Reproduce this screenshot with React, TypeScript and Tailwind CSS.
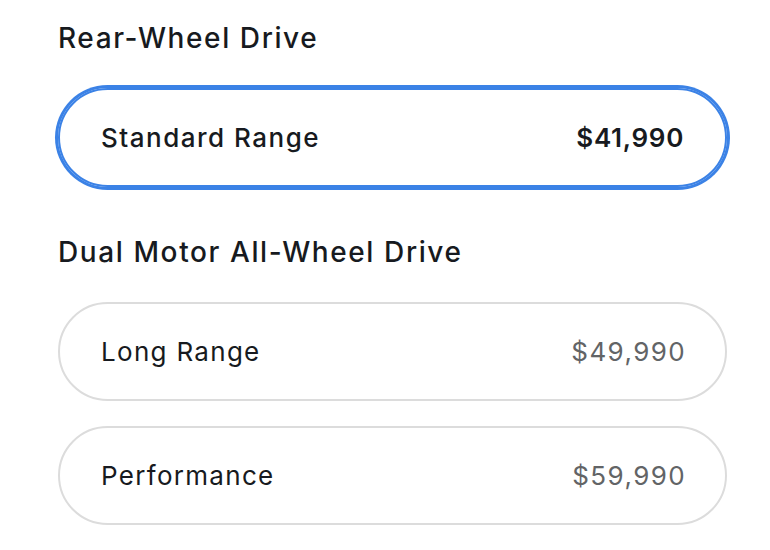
const font = { fontFamily: 'Inter, "Noto Sans", sans-serif' };

interface Trim {
  name: string;
  price: string;
}

function TrimOption({ trim, selected }: { trim: Trim; selected?: boolean }) {
  return (
    <div
      className={
        'flex items-center justify-between h-[99px] rounded-full border-2 pl-[41px] ' +
        (selected ? 'pr-[41px] border-[#3b82e6] shadow-[0_0_0_3px_#3b82e6]' : 'pr-[39px] border-[#dcdcdc]')
      }
    >
      <span className={'text-[26px] text-[#171a20] ' + (selected ? 'font-medium tracking-[1.5px]' : 'font-normal tracking-[1.3px]')}>
        {trim.name}
      </span>
      <span className={'text-[26px] ' + (selected ? 'font-semibold tracking-[0.7px] text-[#171a20]' : 'font-normal tracking-[1.4px] text-[#626466]')}>
        {trim.price}
      </span>
    </div>
  );
}

export default function App() {
  return (
    <div className="w-[770px] h-[550px] bg-white overflow-hidden" style={font}>
      <div className="ml-[58px] w-[669px] pt-[20px]">
        <h2 className="text-[28px] leading-[36px] font-medium text-[#171a20] tracking-[1.6px]">Rear-Wheel Drive</h2>
        <div className="mt-[32px]">
          <TrimOption trim={{ name: 'Standard Range', price: '$41,990' }} selected />
        </div>
        <h2 className="mt-[47px] text-[28px] leading-[36px] font-medium text-[#171a20] tracking-[1.6px]">
          Dual Motor All-Wheel Drive
        </h2>
        <div className="mt-[32px] flex flex-col gap-[25px]">
          <TrimOption trim={{ name: 'Long Range', price: '$49,990' }} />
          <TrimOption trim={{ name: 'Performance', price: '$59,990' }} />
        </div>
      </div>
    </div>
  );
}
